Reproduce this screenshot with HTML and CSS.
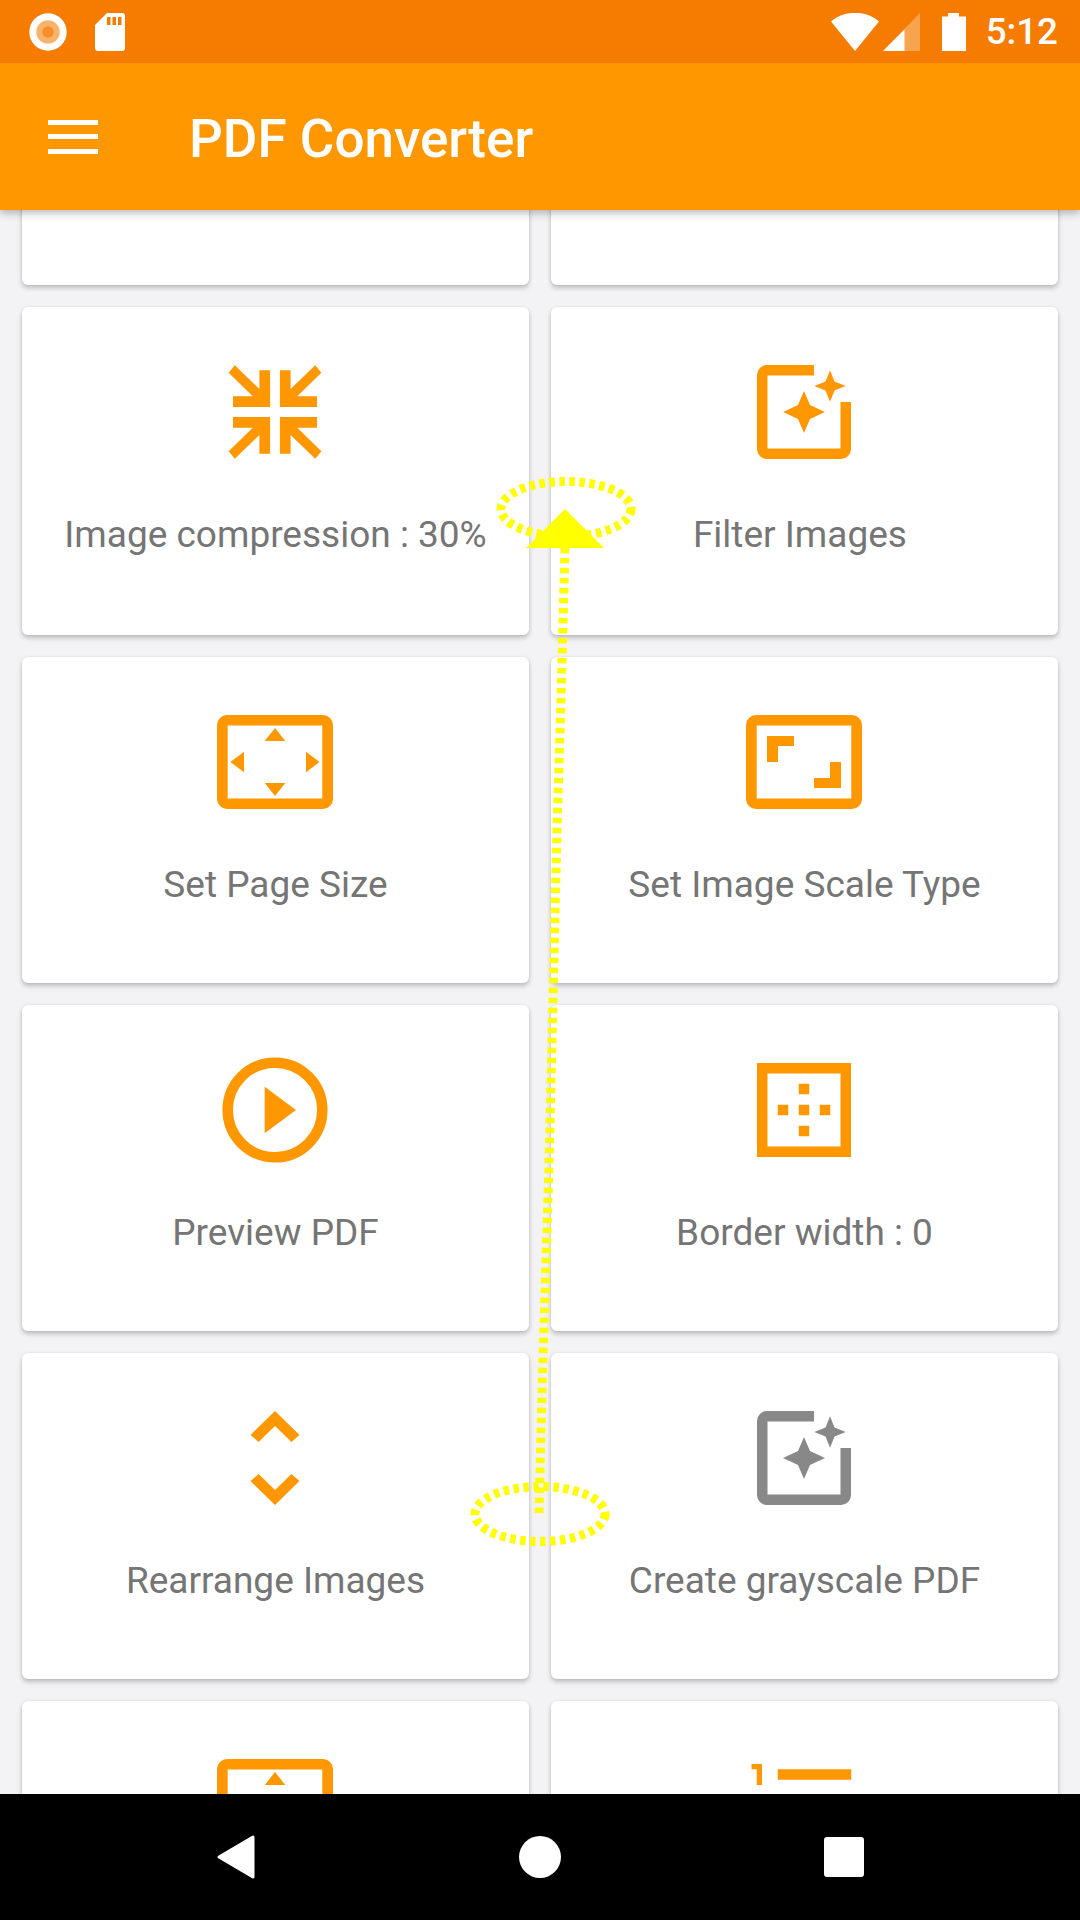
FILE: index.html
```html
<!DOCTYPE html>
<html lang="en">
<head>
<meta charset="utf-8">
<title>PDF Converter</title>
<link rel="stylesheet" href="styles.css">
</head>
<body>
<div class="screen">
  <header class="status">
    <div class="status-group">
      <svg class="st-rec" viewBox="0 0 38 38"><circle cx="19" cy="19" r="18.7" fill="#fff"/><circle cx="19" cy="19" r="11.7" fill="#fbb26b"/><circle cx="19" cy="19" r="5.8" fill="#f78f2d"/></svg>
      <svg class="st-sd" viewBox="0 0 30 38"><path d="M12 0H27a3 3 0 0 1 3 3V35a3 3 0 0 1-3 3H3a3 3 0 0 1-3-3V12Z" fill="#fff"/><path d="M12 4h3.5v8H12ZM17.5 4H21v8h-3.5ZM23 4h3.500v8H23Z" fill="#f57c00"/></svg>
    </div>
    <div class="status-group status-right">
      <svg class="st-wifi" viewBox="0 0 48 38"><path d="M0 8.500C13-3 35-3 48 8.500L24 38Z" fill="#fff"/></svg>
      <svg class="st-signal" viewBox="0 0 37 38"><path d="M37 0V38H0Z" fill="#fff" fill-opacity=".3"/><path d="M21.500 16.500V38H0Z" fill="#fff"/></svg>
      <svg class="st-batt" viewBox="0 0 24 38"><path d="M6 0H17V3.500H24V38H0V3.500H6Z" fill="#fff"/></svg>
      <span class="clock">5:12</span>
    </div>
  </header>
  <div class="appbar">
    <div class="menu"><span class="menu-bar"></span><span class="menu-bar"></span><span class="menu-bar"></span></div>
    <h1 class="title">PDF Converter</h1>
  </div>
  <main class="viewport">
    <div class="grid">
      <div class="card"></div>
      <div class="card"></div>

      <div class="card card-tall">
        <svg class="icon" viewBox="-63 -63 126 126"><path d="M-40.200-46.700-15.600-23V-41.700H-4.900V-5H-42V-15.700H-22.300L-46.400-39.300Z"/><path d="M40.200-46.700 15.600-23V-41.700H4.900V-5H42V-15.700H22.300L46.400-39.300Z"/><path d="M-40.200 46.700-15.600 23V41.700H-4.900V5H-42V15.700H-22.300L-46.400 39.300Z"/><path d="M40.200 46.700 15.600 23V41.700H4.900V5H42V15.700H22.300L46.400 39.300Z"/></svg>
        <p class="label">Image compression : 30%</p>
      </div>
      <div class="card card-tall">
        <svg class="icon" viewBox="-63 -63 126 126"><path d="M10-47H-37A10 10 0 0 0-47-37V37A10 10 0 0 0-37 47H37A10 10 0 0 0 47 37V-10H36.500V36.500H-36.500V-36.500H10Z"/><path d="M0-21 6-7 21 0 6 7 0 21-6 7-21 0-6-7Z"/><path d="M26-41.700 30.500-30.500 41.700-26 30.500-21.500 26-10.300 21.500-21.500 10.300-26 21.500-30.500Z"/></svg>
        <p class="label">Filter Images </p>
      </div>

      <div class="card">
        <svg class="icon" viewBox="-63 -63 126 126"><path fill-rule="evenodd" d="M-48-47H48A10 10 0 0 1 58-37V37A10 10 0 0 1 48 47H-48A10 10 0 0 1-58 37V-37A10 10 0 0 1-48-47ZM-47.300-36.500V36.500H47.300V-36.500Z"/><path d="M0-34 10.300-21H-10.300ZM0 34 10.300 21H-10.300ZM-44.600 0-31-10.300V10.300ZM44.600 0 31-10.300V10.300Z"/></svg>
        <p class="label">Set Page Size</p>
      </div>
      <div class="card">
        <svg class="icon" viewBox="-63 -63 126 126"><path fill-rule="evenodd" d="M-48-47H48A10 10 0 0 1 58-37V37A10 10 0 0 1 48 47H-48A10 10 0 0 1-58 37V-37A10 10 0 0 1-48-47ZM-47.300-36.500V36.500H47.300V-36.500Z"/><path d="M-37-26H-10V-16H-26V0H-37ZM37 26H10V16H26V0H37Z"/></svg>
        <p class="label">Set Image Scale Type</p>
      </div>

      <div class="card">
        <svg class="icon" viewBox="-63 -63 126 126"><circle class="ring" r="47.300"/><path d="M-10.300-23.300 21 0-10.300 23.300Z"/></svg>
        <p class="label">Preview PDF</p>
      </div>
      <div class="card">
        <svg class="icon" viewBox="-63 -63 126 126"><path fill-rule="evenodd" d="M-47-47H47V47H-47ZM-36.500-36.500V36.500H36.500V-36.500Z"/><path d="M-5.250-26.250H5.250V-15.750H-5.250ZM-5.250-5.250H5.250V5.250H-5.250ZM-5.250 15.750H5.250V26.250H-5.250ZM-26.250-5.250H-15.750V5.250H-26.250ZM15.750-5.250H26.250V5.250H15.750Z"/></svg>
        <p class="label">Border width : 0</p>
      </div>

      <div class="card">
        <svg class="icon" viewBox="-63 -63 126 126"><path d="M0-47 24.500-23 16.400-16 0-32-16.400-16-24.500-23ZM0 47 24.500 23 16.400 16 0 32-16.400 16-24.500 23Z"/></svg>
        <p class="label">Rearrange Images</p>
      </div>
      <div class="card">
        <svg class="icon icon-gray" viewBox="-63 -63 126 126"><path d="M10-47H-37A10 10 0 0 0-47-37V37A10 10 0 0 0-37 47H37A10 10 0 0 0 47 37V-10H36.500V36.500H-36.500V-36.500H10Z"/><path d="M0-21 6-7 21 0 6 7 0 21-6 7-21 0-6-7Z"/><path d="M26-41.700 30.500-30.500 41.700-26 30.500-21.500 26-10.300 21.500-21.500 10.300-26 21.500-30.500Z"/></svg>
        <p class="label">Create grayscale PDF</p>
      </div>

      <div class="card">
        <svg class="icon" viewBox="-63 -63 126 126"><path fill-rule="evenodd" d="M-48-47H48A10 10 0 0 1 58-37V37A10 10 0 0 1 48 47H-48A10 10 0 0 1-58 37V-37A10 10 0 0 1-48-47ZM-47.300-36.500V36.500H47.300V-36.500Z"/><path d="M0-34 10.300-21H-10.300Z"/></svg>
      </div>
      <div class="card">
        <svg class="icon" viewBox="0 0 24 24"><path d="M2 17h2v.5H3v1h1v.5H2v1h3v-4H2zm1-9h1V4H2v1h1v3zm-1 3h1.800L2 13.100v.9h3v-1H3.200L5 10.900V10H2v1zm5-6v2h14V5H7zm0 14h14v-2H7v2zm0-6h14v-2H7v2z"/></svg>
      </div>
    </div>
  </main>
  <nav class="navbar">
    <svg class="nav-back" viewBox="0 0 38 44"><path d="M36 2V42L2 22Z" fill="#fff" stroke="#fff" stroke-width="3" stroke-linejoin="round"/></svg>
    <span class="nav-home"></span>
    <span class="nav-recent"></span>
  </nav>
  <svg class="gesture" viewBox="0 0 1080 1920">
    <ellipse class="trace" cx="566" cy="509" rx="65" ry="27.500"/>
    <ellipse class="trace" cx="540" cy="1514" rx="65" ry="27.500"/>
    <path class="trace" d="M539 1513 542 1391 549 1165 552 1040 557 830 561 700 565 548"/>
    <path class="arrow" d="M565 509 604 548H526Z"/>
  </svg>
</div>
</body>
</html>
```
FILE: styles.css
```css
* { box-sizing: border-box; }
html, body { margin: 0; padding: 0; }
body { font-family: Roboto, "Noto Sans", sans-serif; background: #f3f3f6; }

.screen {
  position: relative;
  width: 1080px;
  height: 1920px;
  display: flex;
  flex-direction: column;
  overflow: hidden;
  background: #f3f3f6;
}

.status {
  height: 63px;
  flex: none;
  display: flex;
  align-items: center;
  justify-content: space-between;
  padding: 0 22px 0 29px;
  background: #f57c00;
  position: relative;
  z-index: 3;
}
.status-group { display: flex; align-items: center; gap: 28px; }
.status-right { gap: 0; }
.st-rec { width: 38px; height: 38px; }
.st-sd { width: 30px; height: 38px; }
.st-wifi { width: 48px; height: 38px; margin-right: 4px; }
.st-signal { width: 37px; height: 38px; margin-right: 22px; }
.st-batt { width: 24px; height: 38px; margin-right: 20px; }
.clock { color: #fff; font-size: 36.750px; font-weight: 500; line-height: 63px; }

.appbar {
  height: 147px;
  flex: none;
  display: flex;
  align-items: center;
  padding-left: 48px;
  background: #ff9800;
  position: relative;
  z-index: 2;
  box-shadow: 0 3px 8px rgba(0, 0, 0, .28);
}
.menu { width: 50px; display: flex; flex-direction: column; gap: 9.500px; margin-right: 91px; }
.menu-bar { display: block; height: 5px; background: #fff; }
.title { margin: 5px 0 0; color: #fff; font-size: 53px; font-weight: 500; line-height: 1; }

.viewport { flex: 1; min-height: 0; overflow: hidden; }
.grid {
  display: grid;
  grid-template-columns: 507px 507px;
  column-gap: 22px;
  row-gap: 22px;
  padding: 0 22px;
  margin-top: -251px;
}
.card {
  height: 326px;
  background: #fff;
  border-radius: 6px;
  box-shadow: 0 3px 5px rgba(0, 0, 0, .22), 0 0 3px rgba(0, 0, 0, .08);
  display: flex;
  flex-direction: column;
  align-items: center;
  padding-top: 42px;
}
.card-tall { height: 328px; }

.icon { width: 126px; height: 126px; margin-right: 1px; fill: #ff9800; flex: none; display: block; }
.icon-gray { fill: #888; }
.ring { fill: none; stroke: #ff9800; stroke-width: 10.500; }
.label { margin: 38px 0 0; color: #757575; font-size: 37px; line-height: 44px; white-space: pre; }

.navbar {
  height: 126px;
  flex: none;
  background: #000;
  position: relative;
  z-index: 3;
  display: grid;
  grid-template-columns: 1fr 1fr 1fr;
  align-items: center;
  justify-items: center;
  padding: 0 84px;
}
.nav-back { width: 38px; height: 44px; }
.nav-home { width: 42px; height: 42px; border-radius: 50%; background: #fff; }
.nav-recent { width: 40px; height: 40px; border-radius: 3px; background: #fff; }

.gesture {
  position: absolute;
  left: 0;
  top: 0;
  width: 1080px;
  height: 1920px;
  z-index: 4;
  pointer-events: none;
}
.trace { fill: none; stroke: #ffff00; stroke-width: 9; stroke-dasharray: 5.500 4.500; }
.arrow { fill: #ffff00; }
```
